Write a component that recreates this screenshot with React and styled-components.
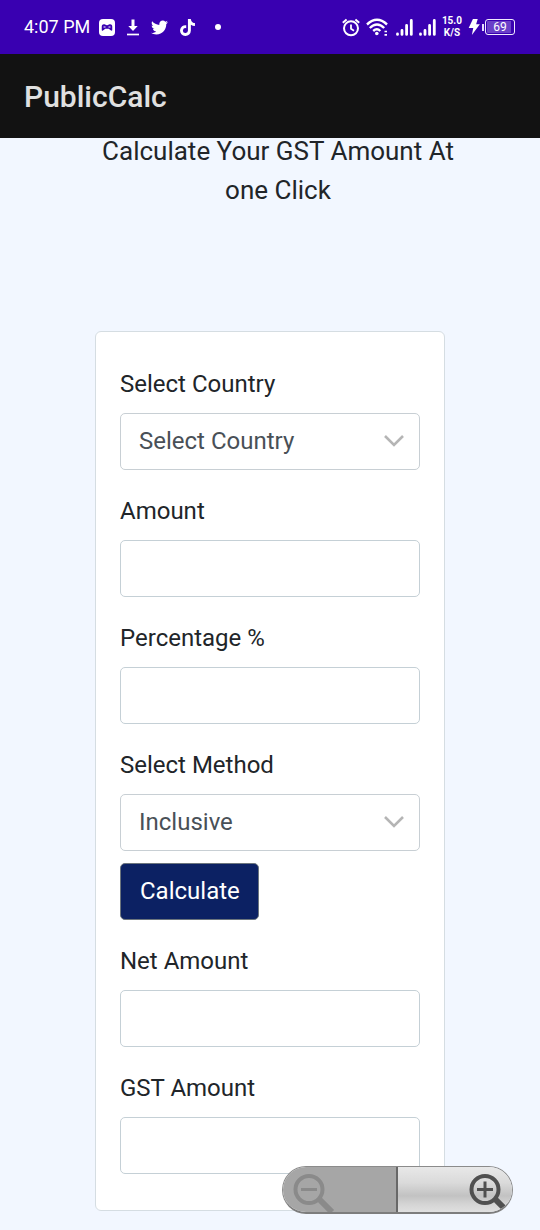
import React from "react";
import styled, { createGlobalStyle } from "styled-components";
import { FaTwitter, FaTiktok } from "react-icons/fa";

const GlobalStyle = createGlobalStyle`
  * { box-sizing: border-box; }
  body {
    margin: 0;
    background: #f2f7ff;
    color: #212529;
    font-family: Roboto, "Liberation Sans", sans-serif;
    font-size: 24px;
    line-height: 36px;
  }
`;

const StatusBar = styled.div`
  display: flex;
  align-items: center;
  justify-content: space-between;
  height: 54px;
  padding: 0 25px 0 24px;
  background: #3900b1;
  color: #fff;
`;

const Clock = styled.time`
  font-size: 18px;
  line-height: 24px;
`;

const StatusGroup = styled.div`
  display: flex;
  align-items: center;
  gap: ${({ $gap }) => $gap}px;
`;

const Dot = styled.span`
  width: 6px;
  height: 6px;
  margin-left: 8px;
  border-radius: 50%;
  background: #fff;
`;

const Speed = styled.span`
  font-size: 10px;
  font-weight: 700;
  line-height: 12px;
  text-align: center;
`;

const Power = styled.div`
  display: flex;
  align-items: center;
  gap: 2px;
`;

const Battery = styled.div`
  display: flex;
  align-items: center;
  gap: 1px;
  &::before {
    content: "";
    width: 2px;
    height: 7px;
    background: #e6dcff;
  }
`;

const BatteryLevel = styled.span`
  width: 30px;
  height: 16px;
  border: 1px solid #f0eaff;
  border-radius: 3px;
  box-shadow: inset 0 0 0 1px #3900b1;
  background: linear-gradient(90deg, #6a3fc8 88%, #3900b1 88%);
  font-size: 12px;
  line-height: 14px;
  text-align: center;
`;

const AppBar = styled.header`
  position: relative;
  z-index: 1;
  display: flex;
  align-items: center;
  height: 84px;
  padding: 2px 24px 0;
  background: #121212;
  color: #e0e0e0;
`;

const AppTitle = styled.span`
  font-size: 30px;
  font-weight: 500;
`;

const Page = styled.main`
  margin-top: -6px;
  padding: 0 95px 19px;
`;

const Heading = styled.h1`
  margin: 0 -16px 121px 0;
  font-size: 26px;
  font-weight: 400;
  line-height: 39px;
  text-align: center;
`;

const Card = styled.form`
  padding: 34px 24px 36px;
  border: 1px solid #d5dde2;
  border-radius: 6px;
  background: #fff;
`;

const Field = styled.div`
  display: flex;
  flex-direction: column;
  gap: 11px;
  & + &, button + & { margin-top: 23px; }
`;

const Input = styled.input`
  width: 100%;
  height: 57px;
  padding: 0 19px;
  border: 1px solid #c5d0d6;
  border-radius: 5px;
  background: #fff;
  color: #495057;
  font: inherit;
`;

const SelectWrap = styled.div`
  display: grid;
  align-items: center;
  & > * { grid-area: 1 / 1; }
  svg {
    justify-self: end;
    margin-right: 15px;
    pointer-events: none;
  }
`;

const Select = styled.select`
  appearance: none;
  width: 100%;
  height: 57px;
  padding: 0 48px 2px 18px;
  border: 1px solid #c8cfd4;
  border-radius: 5px;
  background: #fff;
  color: #495057;
  font: inherit;
`;

const Submit = styled.button`
  display: block;
  height: 57px;
  margin-top: 12px;
  padding: 0 18px 2px 19px;
  border: 1px solid #6c757d;
  border-radius: 5px;
  background: #0c2163;
  color: #fff;
  font: inherit;
`;

const ZoomControls = styled.div`
  position: fixed;
  right: 27px;
  bottom: 16px;
  display: grid;
  grid-template-columns: 1fr 1fr;
  width: 231px;
  height: 48px;
  overflow: hidden;
  border: 1px solid #8b8b8b;
  border-bottom: 2px solid #7d7d7d;
  border-radius: 24px;
`;

const ZoomButton = styled.button`
  display: flex;
  min-width: 0;
  justify-content: ${({ $side }) => ($side === "out" ? "flex-start" : "flex-end")};
  padding: ${({ $side }) => ($side === "out" ? "5px 0 0 10px" : "5px 1px 0 0")};
  border: 0;
  border-right: ${({ $side }) => ($side === "out" ? "2px solid #686868" : "0")};
  background: ${({ $side }) =>
    $side === "out"
      ? "#a6a6a6"
      : "linear-gradient(#e8e8e8 0%, #dadada 35%, #c2c2c2 64%, #d4d4d4 82%, #e0e0e0 100%)"};
`;

const GamepadIcon = () => (
  <svg width="16" height="17" viewBox="0 0 16 17" aria-hidden="true">
    <rect width="16" height="17" rx="4" fill="#fff" />
    <path d="M3.500 11V7.500Q3.500 5.700 5.200 6L8 7.200 10.800 6Q12.500 5.700 12.500 7.500V11L9.800 9H6.200Z" fill="#3900b1" stroke="#3900b1" strokeWidth="1.500" strokeLinejoin="round" />
    <path d="M4.500 8h2M9.500 8h2" stroke="#fff" strokeWidth="1" />
  </svg>
);

const DownloadIcon = () => (
  <svg width="14" height="17" viewBox="0 0 14 17" aria-hidden="true">
    <path d="M5.500 0.500h3V7h3.200L7 12 2.300 7h3.200Z" fill="#fff" />
    <path d="M1 15.500h12" stroke="#fff" strokeWidth="1.700" />
  </svg>
);

const AlarmIcon = () => (
  <svg width="18" height="19" viewBox="0 0 18 18" fill="none" stroke="#fff" strokeWidth="2" aria-hidden="true">
    <circle cx="9" cy="9.800" r="7" />
    <path d="M9 6v4.300l3 2" strokeWidth="1.800" />
    <path d="M0.800 4.200 4.600 0.900M17.200 4.200 13.400 0.900" />
  </svg>
);

const WifiIcon = () => (
  <svg width="24" height="18" viewBox="0 0 24 18" fill="none" stroke="#fff" strokeWidth="2.400" aria-hidden="true">
    <path d="M1 6.500Q11 -2.800 21 6.500" />
    <path d="M3.800 10Q11 3.200 18.200 10" />
    <path d="M7.200 13Q11 9.500 14.300 13" />
    <circle cx="10.800" cy="15.500" r="1.800" fill="#fff" stroke="none" />
    <path d="M18.500 13.500h2.500M18.500 16.800h2.500" strokeWidth="1.700" />
  </svg>
);

const SignalIcon = () => (
  <svg width="17" height="17" viewBox="0 0 17 17" fill="none" stroke="#fff" strokeWidth="2.800" strokeLinecap="round" aria-hidden="true">
    <path d="M1.500 15v.4M6 11.500v3.900M10.600 6.500v8.900M15.300 1.500v13.900" />
  </svg>
);

const BoltIcon = () => (
  <svg width="12" height="16" viewBox="0 0 11 15" aria-hidden="true">
    <path d="M4.500 0H9L7.500 5H11L3.500 15 4.800 8.500H0.500Z" fill="#fff" />
  </svg>
);

const Chevron = () => (
  <svg width="22" height="16" viewBox="0 0 22 16" fill="none" stroke="#b5b5b5" strokeWidth="2.600" aria-hidden="true">
    <path d="M2 2l9 9 9-9" />
  </svg>
);

const Magnifier = ({ color, plus }) => (
  <svg width="42" height="40" viewBox="0 0 42 40" fill="none" stroke={color} aria-hidden="true">
    <circle cx="16" cy="17.500" r="13.500" strokeWidth="4" />
    <path d="M26 27 39 40" strokeWidth="6" />
    <path d={plus ? "M8 17.500h16M16 9.500v16" : "M8 17.500h16"} strokeWidth="3" />
  </svg>
);

const SelectField = ({ id, label, options }) => (
  <Field>
    <label htmlFor={id}>{label}</label>
    <SelectWrap>
      <Select id={id}>
        {options.map((option) => (
          <option key={option}>{option}</option>
        ))}
      </Select>
      <Chevron />
    </SelectWrap>
  </Field>
);

const TextField = ({ id, label, readOnly }) => (
  <Field>
    <label htmlFor={id}>{label}</label>
    <Input id={id} type="text" readOnly={readOnly} />
  </Field>
);

export default function App() {
  return (
    <>
      <GlobalStyle />
      <StatusBar>
        <StatusGroup $gap={9}>
          <Clock>4:07 PM</Clock>
          <StatusGroup $gap={11}>
            <GamepadIcon />
            <DownloadIcon />
            <FaTwitter size={17} />
            <FaTiktok size={17} />
            <Dot />
          </StatusGroup>
        </StatusGroup>
        <StatusGroup $gap={6}>
          <AlarmIcon />
          <WifiIcon />
          <SignalIcon />
          <SignalIcon />
          <Speed>15.0<br />K/S</Speed>
          <Power>
            <BoltIcon />
            <Battery>
              <BatteryLevel>69</BatteryLevel>
            </Battery>
          </Power>
        </StatusGroup>
      </StatusBar>
      <AppBar>
        <AppTitle>PublicCalc</AppTitle>
      </AppBar>
      <Page>
        <Heading>Calculate Your GST Amount At one Click</Heading>
        <Card onSubmit={(event) => event.preventDefault()}>
          <SelectField id="country" label="Select Country" options={["Select Country"]} />
          <TextField id="amount" label="Amount" />
          <TextField id="percentage" label="Percentage %" />
          <SelectField id="method" label="Select Method" options={["Inclusive", "Exclusive"]} />
          <Submit type="submit">Calculate</Submit>
          <TextField id="net" label="Net Amount" readOnly />
          <TextField id="gst" label="GST Amount" readOnly />
        </Card>
      </Page>
      <ZoomControls>
        <ZoomButton type="button" $side="out" aria-label="Zoom out" disabled>
          <Magnifier color="#8a8a8a" />
        </ZoomButton>
        <ZoomButton type="button" $side="in" aria-label="Zoom in">
          <Magnifier color="#505050" plus />
        </ZoomButton>
      </ZoomControls>
    </>
  );
}
